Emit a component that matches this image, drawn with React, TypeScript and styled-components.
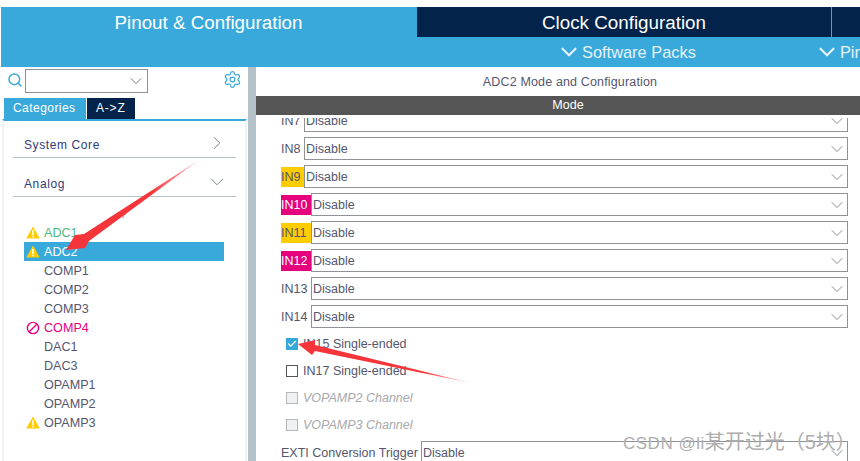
import styled, { createGlobalStyle } from "styled-components";
import { ChevronDown, ChevronRight, Check, Search, Settings } from "lucide-react";

const GlobalStyle = createGlobalStyle`
  html, body {
    margin: 0;
    padding: 0;
    background: #fff;
    overflow: hidden;
  }
  * {
    box-sizing: border-box;
  }
`;

const Page = styled.div`
  position: relative;
  width: 860px;
  height: 461px;
  padding-top: 7px;
  overflow: hidden;
  font-family: "Liberation Sans", Arial, sans-serif;
  color: #54566e;
  display: flex;
  flex-direction: column;
`;

const Header = styled.header`
  margin-left: 1px;
  background: #39a9db;
  height: 60px;
  flex: none;
`;

const TabRow = styled.div`
  display: flex;
  height: 30px;
`;

const TopTab = styled.div<{ $active?: boolean; $w: number }>`
  flex: none;
  width: ${(p) => p.$w}px;
  margin-right: 1px;
  background: ${(p) => (p.$active ? "#39a9db" : "#03234b")};
  color: #fff;
  font-size: 18.8px;
  line-height: 31px;
  text-align: center;
`;

const LastTab = styled.div`
  flex: 1;
  background: #03234b;
`;

const PackRow = styled.div`
  display: flex;
  height: 30px;
  padding-left: 555px;
  gap: 118px;
  overflow: hidden;
  white-space: nowrap;
`;

const PackItem = styled.div`
  display: flex;
  align-items: center;
  gap: 0;
  color: #e4f3fa;
  font-size: 16.4px;
`;

const Body = styled.div`
  flex: 1;
  display: flex;
  min-height: 0;
`;

const Sidebar = styled.aside`
  flex: none;
  width: 248px;
  display: flex;
  flex-direction: column;
`;

const SearchRow = styled.div`
  height: 31px;
  display: flex;
  align-items: flex-start;
  padding: 2px 6px 0 7px;
  color: #39a9db;
`;

const SearchSlot = styled.span`
  display: flex;
  margin-top: 3px;
`;

const SearchCombo = styled.div`
  width: 123px;
  height: 24px;
  margin-left: 2px;
  border: 1px solid #8f9396;
  display: flex;
  align-items: center;
  justify-content: flex-end;
  padding-right: 1px;
  color: #6b7280;
`;

const GearSlot = styled.div`
  margin-left: auto;
  margin-top: 1px;
  display: flex;
`;

const SideTabs = styled.div`
  display: flex;
  padding-left: 4px;
  gap: 1px;
  height: 21px;
`;

const SideTab = styled.div<{ $active?: boolean }>`
  background: ${(p) => (p.$active ? "#39a9db" : "#03234b")};
  color: #fff;
  font-size: 12px;
  letter-spacing: ${(p) => (p.$active ? "0.45px" : "0.8px")};
  line-height: 21px;
  width: ${(p) => (p.$active ? "82px" : "48px")};
  padding-left: 9px;
`;

const SidePanel = styled.div`
  flex: 1;
  margin: 0 1px 0 2px;
  border-top: 2px solid #39a9db;
  border-left: 2px solid #eff1f2;
  border-right: 2px solid #eff1f2;
  padding: 0 9px;
`;

const Category = styled.div`
  height: 39px;
  padding: 17px 11px 0;
  border-bottom: 1px solid #b6c2ca;
  display: flex;
  justify-content: space-between;
  font-size: 12px;
  letter-spacing: 0.6px;
  color: #2f3a78;
  align-items: flex-start;
  line-height: 18px;
  &:first-child {
    height: 37px;
    padding-top: 15px;
  }
`;

const CatChevron = styled.span`
  color: #6b7480;
  display: flex;
  margin: -4px -3px 0 0;
`;

const PeripheralList = styled.ul`
  list-style: none;
  margin: 26px 0 0 11px;
  padding: 0;
  width: 200px;
`;

type Status = "ok" | "warn" | "error" | "selected";

const statusColor: Record<Status, string> = {
  ok: "#54566e",
  warn: "#4bb87f",
  error: "#e6007e",
  selected: "#fff",
};

const Peripheral = styled.li<{ $status: Status }>`
  height: 19px;
  display: flex;
  align-items: center;
  font-size: 12.6px;
  color: ${(p) => statusColor[p.$status]};
  background: ${(p) => (p.$status === "selected" ? "#39a9db" : "transparent")};
`;

const IconSlot = styled.span`
  width: 20px;
  flex: none;
  display: flex;
  padding-left: 2px;
`;

const Divider = styled.div`
  flex: none;
  width: 8px;
  background: #b6c2ca;
`;

const Main = styled.main`
  flex: 1;
  min-width: 0;
  display: flex;
  flex-direction: column;
`;

const MainTitle = styled.div`
  height: 29px;
  flex: none;
  text-align: center;
  font-size: 12.5px;
  line-height: 30px;
  letter-spacing: 0.15px;
  color: #54566e;
  padding-left: 24px;
`;

const ModeBar = styled.div`
  height: 19px;
  flex: none;
  background: #545554;
  color: #fff;
  text-align: center;
  font-size: 12.5px;
  line-height: 19px;
  padding-left: 20px;
`;

const Scroller = styled.div`
  flex: 1;
  margin-top: 3px;
  overflow: hidden;
  padding: 0 12px 0 25px;
`;

// scrolled by a few px in the reference, IN7 is cut off under the Mode bar
const ScrollContent = styled.div`
  margin-top: -9px;
`;

const FieldRow = styled.div`
  display: flex;
  align-items: center;
  height: 23px;
  margin-bottom: 5px;
`;

const FieldLabel = styled.span<{ $w?: number; $mark?: "warn" | "error" }>`
  flex: none;
  width: ${(p) => p.$w ?? 23}px;
  height: 20px;
  line-height: 20px;
  font-size: 12.5px;
  white-space: nowrap;
  background: ${(p) =>
    p.$mark === "warn" ? "#ffcc00" : p.$mark === "error" ? "#e6007e" : "transparent"};
  color: ${(p) => (p.$mark === "error" ? "#fff" : "#54566e")};
`;

const SelectBox = styled.div`
  flex: 1;
  height: 23px;
  border: 1px solid #8f9396;
  display: flex;
  align-items: center;
  justify-content: space-between;
  padding-left: 1px;
  font-size: 12.5px;
  color: #54566e;
`;

const SelectArrow = styled.span`
  display: flex;
  color: #7c8288;
`;

const CheckList = styled.div`
  margin-top: -3px;
`;

const CheckRow = styled.div<{ $disabled?: boolean }>`
  display: flex;
  align-items: center;
  height: 27px;
  padding-left: 5px;
  gap: 5px;
  font-size: 12.5px;
  color: ${(p) => (p.$disabled ? "#a6a8ab" : "#54566e")};
  font-style: ${(p) => (p.$disabled ? "italic" : "normal")};
`;

const CheckBox = styled.span<{ $checked?: boolean; $disabled?: boolean }>`
  flex: none;
  width: 12px;
  height: 12px;
  display: flex;
  align-items: center;
  justify-content: center;
  color: #fff;
  background: ${(p) => (p.$checked ? "#39a9db" : p.$disabled ? "#f0f1f2" : "#fff")};
  border: 1px solid ${(p) => (p.$checked ? "#39a9db" : p.$disabled ? "#b4b7ba" : "#54565a")};
`;

const TriggerRow = styled(FieldRow)`
  margin-top: 3px;
`;

const Overlay = styled.svg`
  position: absolute;
  left: 0;
  top: 0;
  pointer-events: none;
`;

const Watermark = styled.div`
  position: absolute;
  left: 623px;
  top: 431px;
  font-family: "Liberation Sans", "Noto Sans CJK SC", sans-serif;
  font-size: 17px;
  letter-spacing: 0.5px;
  line-height: 22px;
  color: #adadad;
  white-space: nowrap;
`;

const WatermarkCjk = styled.span`
  font-size: 20px;
  letter-spacing: 0;
`;

const WarnIcon = () => (
  <svg width="14" height="13" viewBox="0 0 14 13">
    <path d="M7 0.5 L13.8 12.5 H0.2 Z" fill="#ffcc00" />
    <rect x="6.2" y="4" width="1.6" height="5" fill="#fff" />
    <rect x="6.2" y="9.8" width="1.6" height="1.6" fill="#fff" />
  </svg>
);

const BlockedIcon = () => (
  <svg width="14" height="14" viewBox="0 0 14 14" fill="none" stroke="#e6007e" strokeWidth="1.4">
    <circle cx="7" cy="7" r="5.6" />
    <path d="M3 11 L11 3" />
  </svg>
);

const peripherals: { name: string; status: Status }[] = [
  { name: "ADC1", status: "warn" },
  { name: "ADC2", status: "selected" },
  { name: "COMP1", status: "ok" },
  { name: "COMP2", status: "ok" },
  { name: "COMP3", status: "ok" },
  { name: "COMP4", status: "error" },
  { name: "DAC1", status: "ok" },
  { name: "DAC3", status: "ok" },
  { name: "OPAMP1", status: "ok" },
  { name: "OPAMP2", status: "ok" },
  { name: "OPAMP3", status: "ok" },
];

const inputs: { name: string; w: number; mark?: "warn" | "error" }[] = [
  { name: "IN7", w: 23 },
  { name: "IN8", w: 23 },
  { name: "IN9", w: 23, mark: "warn" },
  { name: "IN10", w: 30, mark: "error" },
  { name: "IN11", w: 30, mark: "warn" },
  { name: "IN12", w: 30, mark: "error" },
  { name: "IN13", w: 30 },
  { name: "IN14", w: 30 },
];

const Arrow = () => <ChevronDown size={20} strokeWidth={1.1} />;

const App = () => {
  return (
    <Page>
      <GlobalStyle />
      <Header>
        <TabRow>
          <TopTab $active $w={415}>
            Pinout &amp; Configuration
          </TopTab>
          <TopTab $w={414}>Clock Configuration</TopTab>
          <LastTab />
        </TabRow>
        <PackRow>
          <PackItem>
            <ChevronDown size={26} strokeWidth={2} />
            Software Packs
          </PackItem>
          <PackItem>
            <ChevronDown size={26} strokeWidth={2} />
            Pinout
          </PackItem>
        </PackRow>
      </Header>
      <Body>
        <Sidebar>
          <SearchRow>
            <SearchSlot>
              <Search size={16} strokeWidth={2.2} />
            </SearchSlot>
            <SearchCombo>
              <ChevronDown size={20} strokeWidth={1.1} />
            </SearchCombo>
            <GearSlot>
              <Settings size={19} strokeWidth={1.6} />
            </GearSlot>
          </SearchRow>
          <SideTabs>
            <SideTab $active>Categories</SideTab>
            <SideTab>A-&gt;Z</SideTab>
          </SideTabs>
          <SidePanel>
            <Category>
              System Core
              <CatChevron>
                <ChevronRight size={22} strokeWidth={1} />
              </CatChevron>
            </Category>
            <Category>
              Analog
              <CatChevron>
                <ChevronDown size={22} strokeWidth={1} />
              </CatChevron>
            </Category>
            <PeripheralList>
              {peripherals.map((p) => (
                <Peripheral key={p.name} $status={p.status}>
                  <IconSlot>
                    {(p.status === "warn" || p.status === "selected" || p.name === "OPAMP3") && (
                      <WarnIcon />
                    )}
                    {p.status === "error" && <BlockedIcon />}
                  </IconSlot>
                  {p.name}
                </Peripheral>
              ))}
            </PeripheralList>
          </SidePanel>
        </Sidebar>
        <Divider />
        <Main>
          <MainTitle>ADC2 Mode and Configuration</MainTitle>
          <ModeBar>Mode</ModeBar>
          <Scroller>
            <ScrollContent>
              {inputs.map((i) => (
                <FieldRow key={i.name}>
                  <FieldLabel $w={i.w} $mark={i.mark}>
                    {i.name}
                  </FieldLabel>
                  <SelectBox>
                    Disable
                    <SelectArrow>
                      <Arrow />
                    </SelectArrow>
                  </SelectBox>
                </FieldRow>
              ))}
              <CheckList>
                <CheckRow>
                  <CheckBox $checked>
                    <Check size={10} strokeWidth={3} />
                  </CheckBox>
                  IN15 Single-ended
                </CheckRow>
                <CheckRow>
                  <CheckBox />
                  IN17 Single-ended
                </CheckRow>
                <CheckRow $disabled>
                  <CheckBox $disabled />
                  VOPAMP2 Channel
                </CheckRow>
                <CheckRow $disabled>
                  <CheckBox $disabled />
                  VOPAMP3 Channel
                </CheckRow>
              </CheckList>
              <TriggerRow>
                <FieldLabel $w={140}>EXTI Conversion Trigger</FieldLabel>
                <SelectBox>
                  Disable
                  <SelectArrow>
                    <Arrow />
                  </SelectArrow>
                </SelectBox>
              </TriggerRow>
            </ScrollContent>
          </Scroller>
        </Main>
      </Body>
      <Overlay width="860" height="461" viewBox="0 0 860 461">
        <defs>
          <linearGradient id="arrowA" gradientUnits="userSpaceOnUse" x1="199" y1="160" x2="150" y2="192">
            <stop offset="0" stopColor="#f5353a" stopOpacity="0.25" />
            <stop offset="1" stopColor="#f5353a" />
          </linearGradient>
          <linearGradient id="arrowB" gradientUnits="userSpaceOnUse" x1="471" y1="383" x2="420" y2="371">
            <stop offset="0" stopColor="#f5353a" stopOpacity="0.25" />
            <stop offset="1" stopColor="#f5353a" />
          </linearGradient>
        </defs>
        <path d="M118 213 L127 213 L123 219 Z" fill="#c9cdd0" />
        <path d="M199 160 L84 234 L75 235 L66 250 L85 248 L89 241 Z" fill="url(#arrowA)" />
        <path d="M471 383 L315 345 L315 340 L298 344 L312 355 L315 351 Z" fill="url(#arrowB)" />
      </Overlay>
      <Watermark>
        CSDN @li<WatermarkCjk>某开过光（5块）</WatermarkCjk>
      </Watermark>
    </Page>
  );
};

export default App;
